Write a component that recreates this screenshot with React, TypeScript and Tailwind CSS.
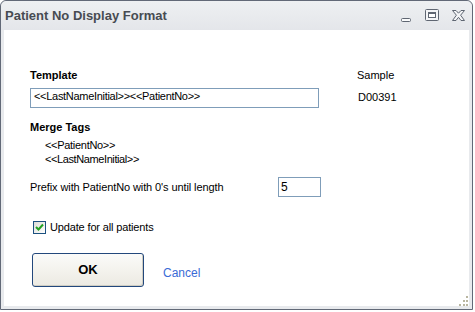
function WindowButtons() {
    return (
        <div className="flex items-center">
            {/* minimize */}
            <svg width="12" height="6" viewBox="0 0 12 6" className="mt-[8px] mr-[13px]">
                <rect x="1.5" y="1.5" width="9" height="3" rx="1" fill="#fafbfc" stroke="#5f6672" strokeWidth="1" />
            </svg>
            {/* maximize */}
            <svg width="14" height="13" viewBox="0 0 14 13" className="mr-[12px]">
                <rect x="0.5" y="0.5" width="13" height="11" rx="1" fill="#f4f5f7" stroke="#5f6672" />
                <rect x="3.5" y="3.5" width="7" height="5" fill="#ffffff" stroke="#5f6672" />
                <line x1="3.5" y1="4.5" x2="10.5" y2="4.5" stroke="#5f6672" />
            </svg>
            {/* close */}
            <svg width="15" height="13" viewBox="0 0 15 13">
                <path
                    d="M1.5 1.5 H5 L7.5 4.2 L10 1.5 H13.5 L9.6 6.2 L13.5 11.5 H10 L7.5 8.3 L5 11.5 H1.5 L5.4 6.2 Z"
                    fill="#f4f5f7"
                    stroke="#5f6672"
                    strokeLinejoin="round"
                />
            </svg>
        </div>
    )
}

function CheckBox() {
    return (
        <div className="w-[13px] h-[13px] border border-[#1c5180] bg-gradient-to-br from-[#dcdcd7] to-white flex items-center justify-center">
            <svg width="9" height="9" viewBox="0 0 9 9">
                <path d="M1 4 L3.5 6.5 L8 1.5" fill="none" stroke="#21a121" strokeWidth="2" />
            </svg>
        </div>
    )
}

export default function App() {
    return (
        <div className="w-[475px] h-[312px] bg-white font-['Liberation_Sans',Arial,sans-serif] text-black">
            <div className="relative w-[473px] h-[310px] border border-[#626977] rounded-t-[6px] bg-[#e8eaed] flex flex-col">
                {/* title bar */}
                <div className="h-[29px] flex items-center justify-between pl-[4px] pr-[6px] bg-gradient-to-b from-[#eef0f2] to-[#e4e6ea] rounded-t-[6px]">
                    <span className="text-[13px] leading-[16px] font-bold text-[#474b52] mt-[1px]">Patient No Display Format</span>
                    <WindowButtons />
                </div>

                {/* body */}
                <div className="flex-1 bg-white mx-[3px] mb-[3px] pl-[26px] pt-[39px] flex flex-col text-[11px] leading-[13px]">
                    <div className="flex">
                        <div className="w-[327px] font-bold">Template</div>
                        <div>Sample</div>
                    </div>

                    <div className="flex items-start mt-[6px]">
                        <div className="w-[289px] h-[20px] border border-[#7f9db9] pl-[3px] pt-[1px] tracking-[-0.3px]">
                            &lt;&lt;LastNameInitial&gt;&gt;&lt;&lt;PatientNo&gt;&gt;
                        </div>
                        <div className="ml-[39px] mt-[3px]">D00391</div>
                    </div>

                    <div className="font-bold mt-[13px]">Merge Tags</div>
                    <div className="pl-[15px] mt-[5px] tracking-[-0.3px]">&lt;&lt;PatientNo&gt;&gt;</div>
                    <div className="pl-[15px] mt-[1px] tracking-[-0.4px]">&lt;&lt;LastNameInitial&gt;&gt;</div>

                    <div className="flex items-center mt-[11px]">
                        <div className="w-[248px] tracking-[-0.1px]">Prefix with PatientNo with 0's until length</div>
                        <div className="w-[43px] h-[20px] border border-[#7f9db9] pl-[2px] flex items-center text-[12px]">5</div>
                    </div>

                    <div className="flex items-center mt-[24px] ml-[3px] gap-[4px]">
                        <CheckBox />
                        <span className="tracking-[-0.15px]">Update for all patients</span>
                    </div>

                    <div className="flex items-start mt-[19px] ml-[2px]">
                        <button className="w-[112px] h-[34px] rounded-[3px] border border-[#23487c] bg-gradient-to-b from-[#fbfbf9] to-[#eceae2] shadow-[inset_-1px_-1px_0_#cfcdc2] flex items-center justify-center text-[13px] leading-[16px] font-bold">
                            OK
                        </button>
                        <span className="ml-[19px] mt-[13px] text-[12px] leading-[14px] text-[#3a6bd6]">Cancel</span>
                    </div>
                </div>

                {/* resize grip */}
                <svg width="10" height="10" viewBox="0 0 10 10" className="absolute right-[3px] bottom-[3px]">
                    <rect x="7" y="0" width="2" height="2" fill="#b9b6a0" />
                    <rect x="4" y="4" width="2" height="2" fill="#b9b6a0" />
                    <rect x="7" y="4" width="2" height="2" fill="#b9b6a0" />
                    <rect x="0" y="8" width="2" height="2" fill="#b9b6a0" />
                    <rect x="4" y="8" width="2" height="2" fill="#b9b6a0" />
                    <rect x="7" y="8" width="2" height="2" fill="#b9b6a0" />
                </svg>
            </div>
        </div>
    )
}
